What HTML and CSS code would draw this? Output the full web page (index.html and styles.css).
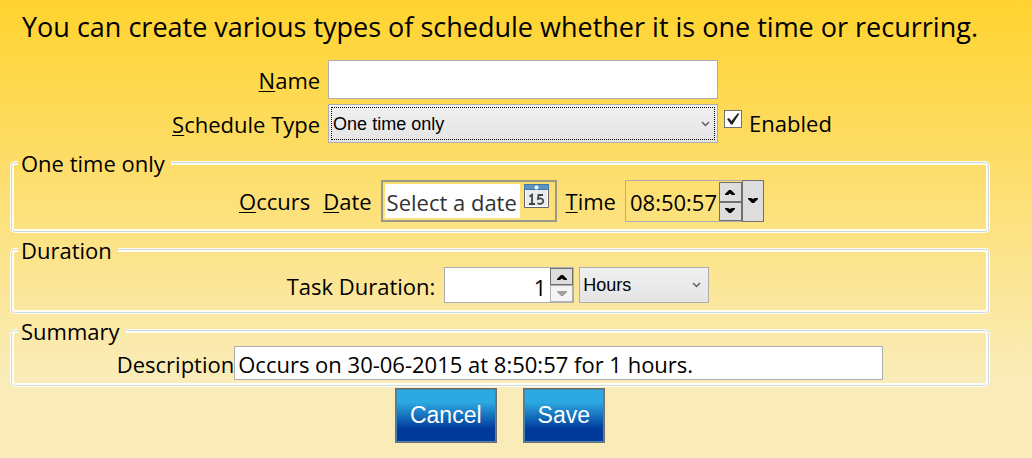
FILE: index.html
```html
<!DOCTYPE html>
<html lang="en">
<head>
<meta charset="utf-8">
<title>Schedule</title>
<link rel="stylesheet" href="styles.css">
</head>
<body>
<form class="schedule">
  <h1 class="intro">You can create various types of schedule whether it is one time or recurring.</h1>

  <div class="general">
    <label class="general-label" for="name"><u>N</u>ame</label>
    <input class="field" id="name" type="text">
    <span></span>
    <label class="general-label" for="type"><u>S</u>chedule Type</label>
    <div class="focus-frame">
      <select class="combo combo-wide" id="type">
        <option>One time only</option>
        <option>Recurring</option>
      </select>
    </div>
    <div class="enabled">
      <input class="check" id="enabled" type="checkbox" checked>
      <label for="enabled">Enabled</label>
    </div>
  </div>

  <fieldset class="group">
    <legend class="group-title">One time only</legend>
    <div class="row row-occurs">
      <span class="occurs"><u>O</u>ccurs</span>
      <label class="date-label" for="date"><u>D</u>ate</label>
      <div class="date-picker">
        <input class="date-input" id="date" type="text" placeholder="Select a date">
        <button class="calendar" type="button" aria-label="Open calendar">
          <svg width="25" height="24" viewBox="0 0 25 24">
            <path d="M.5 5.500V23.500H24.500V5.500z" fill="#fff" stroke="#666"/>
            <path d="M2 6H23V22H2z" fill="#e9ecee"/>
            <path d="M0 0H25V6H0z" fill="#4579a8"/>
            <path d="M1 1H24V5H1z" fill="#5b93c4"/>
            <circle cx="12.500" cy="3.500" r="2" fill="#fff"/>
            <path d="M5.500 12.500L8 10.800V20M5 20H11" fill="none" stroke="#444" stroke-width="1.800"/>
            <path d="M19 11H14.500L14 15C17 13.800 19.300 14.800 19.300 17C19.300 19.800 16 20.500 13.500 19.300" fill="none" stroke="#444" stroke-width="1.800"/>
          </svg>
        </button>
      </div>
      <label class="time-label" for="time"><u>T</u>ime</label>
      <div class="time-picker">
        <input class="time-input" id="time" type="text" value="08:50:57">
        <div class="spinner">
          <button class="step" type="button" aria-label="Later"><svg width="10" height="6" viewBox="0 0 10 6"><path d="M0 5L4 1H6L10 5V6H7L5 4.500L3 6H0z"/></svg></button>
          <button class="step" type="button" aria-label="Earlier"><svg width="10" height="6" viewBox="0 0 10 6"><path d="M0 0H3L5 1L7 0H10V1L6 5H4L0 1z"/></svg></button>
        </div>
        <button class="drop" type="button" aria-label="Show times"><svg width="10" height="6" viewBox="0 0 10 6"><path d="M0 0H3L5 1L7 0H10V1L6 5H4L0 1z"/></svg></button>
      </div>
    </div>
  </fieldset>

  <fieldset class="group">
    <legend class="group-title">Duration</legend>
    <div class="row row-duration">
      <label class="duration-label" for="amount">Task Duration:</label>
      <div class="number">
        <input class="number-input" id="amount" type="text" inputmode="numeric" value="1">
        <div class="spinner">
          <button class="step" type="button" aria-label="Increase"><svg width="10" height="6" viewBox="0 0 10 6"><path d="M0 5L4 1H6L10 5V6H7L5 4.500L3 6H0z"/></svg></button>
          <button class="step" type="button" aria-label="Decrease" disabled><svg width="10" height="6" viewBox="0 0 10 6"><path d="M0 0H10V1L6 5H4L0 1z"/></svg></button>
        </div>
      </div>
      <select class="combo combo-unit" aria-label="Duration unit">
        <option>Hours</option>
        <option>Days</option>
      </select>
    </div>
  </fieldset>

  <fieldset class="group group-summary">
    <legend class="group-title">Summary</legend>
    <div class="row">
      <label for="description">Description</label>
      <input class="field description" id="description" type="text" value="Occurs on 30-06-2015 at 8:50:57 for 1 hours.">
    </div>
  </fieldset>

  <div class="actions">
    <button class="action" type="button">Cancel</button>
    <button class="action" type="submit">Save</button>
  </div>
</form>
</body>
</html>
```
FILE: styles.css
```css
* {
  box-sizing: border-box;
}

body {
  margin: 0;
  min-height: 100vh;
  background: linear-gradient(#ffd32f 0, #fddd68 35%, #faecb8 82%, #faecb8 100%);
  color: #000;
  font-family: "Segoe UI", "Open Sans", "Noto Sans", sans-serif;
  font-size: 22px;
  line-height: 30px;
}

input,
select,
button {
  margin: 0;
  border-radius: 0;
  color: inherit;
  font: inherit;
}

u {
  text-underline-offset: 2px;
  text-decoration-thickness: 1px;
  text-decoration-skip-ink: none;
}

.schedule {
  padding: 8px 42px 15px 10px;
}

.intro {
  margin: 0 0 14px;
  font-size: 27px;
  font-weight: 400;
  line-height: 38px;
  text-align: center;
  white-space: nowrap;
}

.general {
  display: grid;
  grid-template-columns: auto minmax(0, 390px) auto;
  grid-auto-rows: 39px;
  justify-content: center;
  align-items: center;
  gap: 5px 8px;
  padding-left: 4px;
}

.general-label {
  padding-top: 1px;
  text-align: right;
}

.field {
  width: 100%;
  height: 39px;
  padding: 2px 3px;
  border: 1px solid #abadb3;
  background: #fff;
}

.combo {
  appearance: none;
  border: 1px solid #acacac;
  background: url("data:image/svg+xml,%3Csvg xmlns='http://www.w3.org/2000/svg' width='9' height='6'%3E%3Cpath d='M1 1L4.500 4.500L8 1' fill='none' stroke='%23606060' stroke-width='1.500'/%3E%3C/svg%3E") no-repeat right 7px center, linear-gradient(#f0f0f0, #e4e4e4);
  font-family: "Liberation Sans", Arial, sans-serif;
  font-size: 18px;
  line-height: 24px;
}

.focus-frame {
  display: grid;
}

.combo-wide {
  height: 39px;
  padding: 0 24px 0 4px;
  outline: 1px dotted #000;
  outline-offset: -4px;
}

.enabled {
  display: flex;
  align-items: center;
  gap: 7px;
  margin-left: -2px;
}

.enabled label {
  padding-bottom: 2px;
}

.check {
  appearance: none;
  width: 18px;
  height: 18px;
  margin-bottom: 10px;
  border: 1px solid #707070;
  background: #fff;
}

.check:checked {
  background: #fff url("data:image/svg+xml,%3Csvg xmlns='http://www.w3.org/2000/svg' width='14' height='14'%3E%3Cpath d='M1 7L3 6L5.500 9L11.500 1.500L13.500 1.500L6.500 12.500H5z' fill='%23212121'/%3E%3C/svg%3E") no-repeat center;
}

.group {
  min-width: 0;
  margin: 0 0 4px;
  padding: 4px 0 7px;
  border: 4px solid #d5dfe5;
  border-image: url("data:image/svg+xml,%3Csvg xmlns='http://www.w3.org/2000/svg' width='30' height='30'%3E%3Crect x='2' y='2' width='26' height='26' rx='3' fill='none' stroke='%23fff' stroke-opacity='.9' stroke-width='4'/%3E%3Crect x='1.500' y='1.500' width='27' height='27' rx='3' fill='none' stroke='%23ccd7de'/%3E%3C/svg%3E") 6 / 6px;
}

.general + .group {
  margin-top: 7px;
}

.group-title {
  margin-left: 4px;
  padding: 0 6px 0 3px;
  line-height: 26px;
}

.group-summary {
  margin-bottom: 1px;
  padding: 2px 0 3px;
}

.row {
  display: flex;
  justify-content: center;
  align-items: center;
}

.row-occurs {
  padding-left: 3px;
}

.row-duration {
  padding-right: 4px;
}

.occurs {
  margin-right: 13px;
}

.date-label,
.time-label,
.duration-label {
  margin-right: 9px;
}

.duration-label {
  padding-top: 2px;
}

.date-picker {
  display: flex;
  align-items: flex-start;
  gap: 4px;
  width: 176px;
  height: 42px;
  margin-right: 9px;
  padding: 2px 6px 2px 2px;
  border: 2px solid #99998a;
}

.date-input {
  flex: 1;
  min-width: 0;
  height: 34px;
  padding: 2px 0 0 2px;
  border: 0;
  background: #fff;
}

.date-input::placeholder {
  color: #333;
  opacity: 1;
}

.calendar {
  display: flex;
  padding: 0;
  border: 0;
  background: none;
}

.time-picker {
  display: flex;
  height: 42px;
  border: 1px solid #abadb3;
}

.time-input {
  width: 93px;
  padding: 2px 0 0 4px;
  border: 0;
  background: none;
}

.spinner {
  display: grid;
  grid-template-rows: 1fr 1fr;
  width: 23px;
}

.time-picker .spinner {
  padding-top: 1px;
}

.step,
.drop {
  display: flex;
  justify-content: center;
  align-items: center;
  padding: 0;
  border: 1px solid #707070;
  background: #ddd;
}

.step:disabled {
  border-color: #adb2b5;
  background: #f4f4f4;
  fill: #a0a0a0;
}

.drop {
  width: 22px;
  margin: -1px -1px -1px 0;
}

.number {
  display: flex;
  width: 130px;
  height: 36px;
  margin-right: 5px;
  border: 1px solid #abadb3;
  background: #fff;
}

.number-input {
  flex: 1;
  min-width: 0;
  padding: 4px 4px 0 0;
  border: 0;
  background: none;
  text-align: right;
}

.combo-unit {
  width: 130px;
  height: 36px;
  padding: 0 20px 0 3px;
}

.row label[for="description"] {
  padding-top: 2px;
}

.description {
  flex: 0 1 649px;
  min-width: 0;
  height: 34px;
  padding: 2px 3px 0;
}

.actions {
  display: flex;
  justify-content: center;
  gap: 26px;
}

.action {
  height: 55px;
  padding: 0 14px 2px;
  border: 1px solid #707070;
  background: linear-gradient(#2da9e1 25%, #003b9b 75%);
  box-shadow: inset 0 0 0 1px #4a86a8;
  color: #fff;
  font-family: "Liberation Sans", Arial, sans-serif;
  font-size: 23px;
}
```
